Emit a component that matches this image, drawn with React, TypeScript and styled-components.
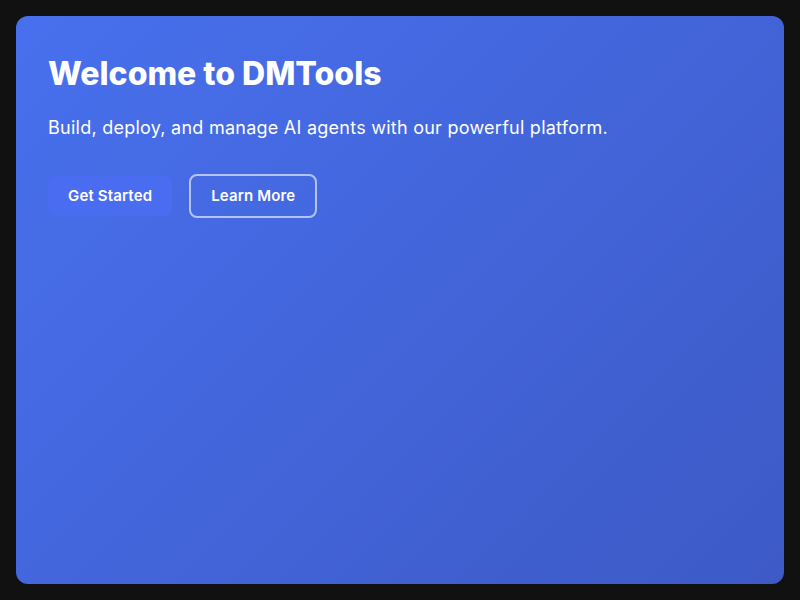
import React from "react";
import styled, { createGlobalStyle } from "styled-components";

const GlobalStyle = createGlobalStyle`
	* {
		box-sizing: border-box;
	}
	html, body {
		margin: 0;
		padding: 0;
		background-color: #111111;
		font-family: Inter, "Noto Sans", sans-serif;
	}
`;

const App: React.FC = () => {
	return (
		<Page>
			<GlobalStyle />
			<Hero>
				<Title>Welcome to DMTools</Title>
				<Subtitle>
					Build, deploy, and manage AI agents with our powerful platform.
				</Subtitle>
				<Actions>
					<Button>Get Started</Button>
					<Button outline>Learn More</Button>
				</Actions>
			</Hero>
		</Page>
	);
};

export default App;

const Page = styled.div`
	height: 600px;
	padding: 16px;
	display: flex;
`;

const Hero = styled.section`
	flex: 1;
	border-radius: 12px;
	padding: 39px 32px;
	background: linear-gradient(135deg, #4870ee 0%, #3d5ac6 100%);
	color: white;
`;

const Title = styled.h1`
	margin: 0 0 21px;
	font-size: 32px;
	font-weight: 800;
	line-height: 1.2;
`;

const Subtitle = styled.p`
	margin: 0 0 33px;
	font-size: 18px;
	line-height: 1.5;
	letter-spacing: 0.25px;
`;

const Actions = styled.div`
	display: flex;
	align-items: center;
	gap: 17px;
`;

const Button = styled.button<{ outline?: boolean }>`
	font-family: inherit;
	font-size: 15px;
	font-weight: 600;
	line-height: 20px;
	letter-spacing: 0.15px;
	color: white;
	padding: 10px 20px;
	border-radius: 8px;
	cursor: pointer;
	background-color: ${(p) => (p.outline ? "transparent" : "#4a6cf0")};
	border: ${(p) => (p.outline ? "2px solid rgba(255, 255, 255, 0.6)" : "none")};
`;
